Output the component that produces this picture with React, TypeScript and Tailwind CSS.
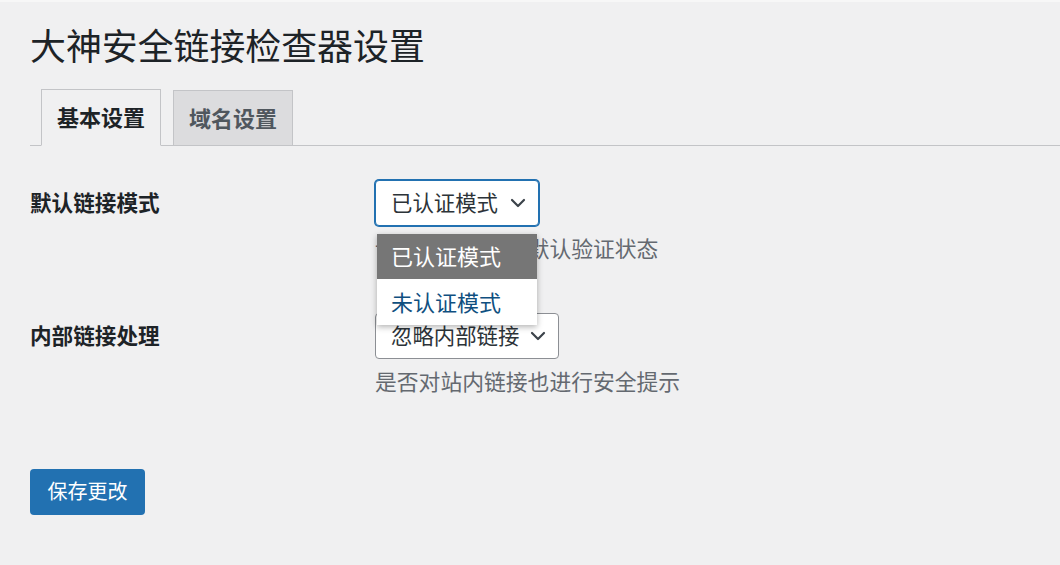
import React from "react";

const font = { fontFamily: '"Noto Sans", "Noto Sans CJK SC", sans-serif' };

function Chevron() {
  return (
    <svg width="16" height="10" viewBox="0 0 16 10" className="shrink-0">
      <path d="M2 2 L8 8 L14 2" fill="none" stroke="#3c434a" strokeWidth="2.2" strokeLinecap="round" strokeLinejoin="round" />
    </svg>
  );
}

export default function App() {
  return (
    <div className="min-h-screen bg-[#f0f0f1] border-t-2 border-[#f7f7f7] text-[#1d2327]" style={font}>
      <div className="pl-[30px] pt-[22px]">
        <h1 className="text-[35.9px] leading-[46px] font-normal text-[#1d2327]">大神安全链接检查器设置</h1>
        <div className="mt-[19px] flex items-end gap-[12px] border-b border-[#c3c4c7] pl-[11px]">
          <div className="-mb-px h-[57px] w-[120px] border border-[#c3c4c7] border-b-[#f0f0f1] bg-[#f0f0f1] flex items-center justify-center text-[22px] font-bold text-[#1d2327]">
            基本设置
          </div>
          <div className="-mb-px h-[56px] w-[120px] border border-[#c3c4c7] bg-[#dcdcde] flex items-center justify-center text-[22px] font-bold text-[#50575e]">
            域名设置
          </div>
        </div>

        <div className="mt-[34px] flex">
          <div className="w-[345px] h-[46px] flex items-center text-[21.6px] font-bold">默认链接模式</div>
          <div>
            <div className="relative">
              <div className="h-[46px] inline-flex items-center gap-[12px] pl-[15px] pr-[12px] border border-[#2271b1] shadow-[0_0_0_1px_#2271b1] rounded-[4px] bg-white text-[21.4px] text-[#2c3338]">
                <span>已认证模式</span>
                <Chevron />
              </div>
              <div className="absolute left-[2px] top-[54px] w-[160px] bg-white shadow-[0_2px_6px_rgba(0,0,0,0.3)] z-10 text-[22px]">
                <div className="h-[45px] flex items-center pl-[14px] bg-[#767676] text-white">已认证模式</div>
                <div className="h-[46px] flex items-center pl-[14px] text-[#0f4f80]">未认证模式</div>
              </div>
            </div>
            <div className="mt-[8px] text-[21.8px] leading-[30px] text-[#646970]">设置外部链接的默认验证状态</div>
          </div>
        </div>

        <div className="mt-[49px] flex">
          <div className="w-[345px] h-[46px] flex items-center text-[21.6px] font-bold">内部链接处理</div>
          <div>
            <div className="h-[46px] inline-flex items-center gap-[11px] pl-[15px] pr-[12px] border border-[#8c8f94] rounded-[4px] bg-white text-[21.4px] text-[#2c3338]">
              <span>忽略内部链接</span>
              <Chevron />
            </div>
            <div className="mt-[8px] text-[21.8px] leading-[30px] text-[#646970]">是否对站内链接也进行安全提示</div>
          </div>
        </div>

        <button className="mt-[72px] h-[46px] w-[115px] rounded-[4px] bg-[#2271b1] text-white text-[20px] flex items-center justify-center">
          保存更改
        </button>
      </div>
    </div>
  );
}
